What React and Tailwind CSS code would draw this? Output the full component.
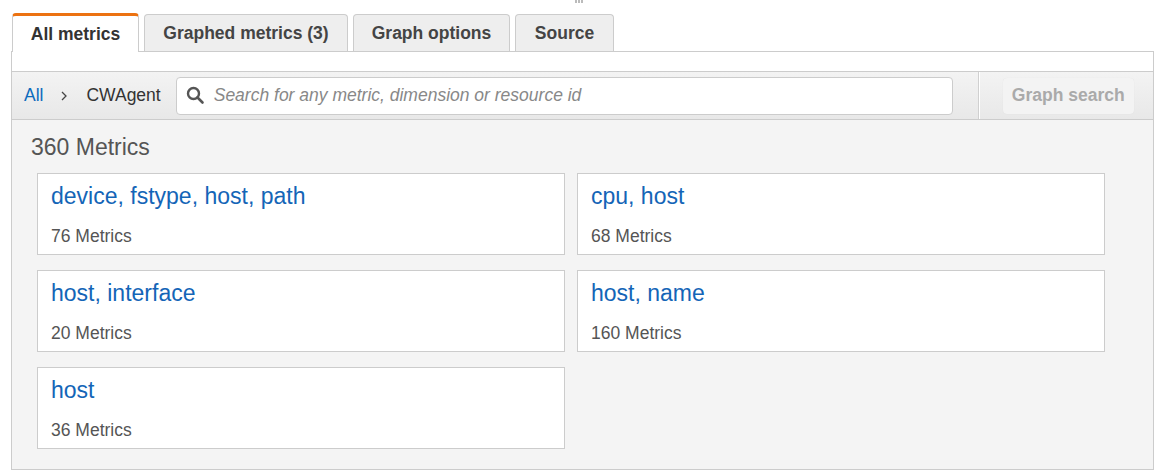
import React from 'react';

const tabs = [
  { label: 'All metrics', width: 'w-[127px]', active: true },
  { label: 'Graphed metrics (3)', width: 'w-[204px]' },
  { label: 'Graph options', width: 'w-[157px]' },
  { label: 'Source', width: 'w-[99px]' },
];

const groups = [
  { name: 'device, fstype, host, path', count: 76 },
  { name: 'cpu, host', count: 68 },
  { name: 'host, interface', count: 20 },
  { name: 'host, name', count: 160 },
  { name: 'host', count: 36 },
];

const App = () => {
  return (
    <div className="relative w-[1165px] h-[475px] bg-white font-['Liberation_Sans',Arial,sans-serif] overflow-hidden">
      {/* drag handle */}
      <div className="absolute left-[575px] top-0 flex gap-[1px]">
        <span className="w-[2px] h-[3px] bg-[#bbb]" />
        <span className="w-[2px] h-[3px] bg-[#bbb]" />
        <span className="w-[2px] h-[3px] bg-[#bbb]" />
      </div>

      <div className="flex items-end gap-[5px] pl-[12px] pt-[13px]">
        {tabs.map((tab) =>
          tab.active ? (
            <div
              key={tab.label}
              className={`${tab.width} h-[39px] -mb-[1px] relative z-10 flex items-center justify-center bg-white border-x border-[#ccc] border-t-[3px] border-t-[#ec7211] rounded-t-[4px] text-[17.5px] font-bold text-[#333]`}
            >
              {tab.label}
            </div>
          ) : (
            <div
              key={tab.label}
              className={`${tab.width} h-[37px] flex items-center justify-center bg-[#eeeeee] border border-b-0 border-[#ccc] rounded-t-[4px] text-[17.5px] font-bold text-[#444]`}
            >
              {tab.label}
            </div>
          )
        )}
      </div>

      <div className="ml-[11px] w-[1143px] border border-[#ccc]">
        <div className="h-[19px] bg-white" />

        <div className="h-[49px] flex items-center border-y border-[#ccc] bg-gradient-to-b from-[#f3f3f3] to-[#e8e8e8]">
          <span className="ml-[12px] text-[17.5px] text-[#0d6bbd]">All</span>
          <svg className="ml-[17px]" width="8" height="12" viewBox="0 0 8 12">
            <polyline points="2,2 6,6 2,10" fill="none" stroke="#444" strokeWidth="1.3" />
          </svg>
          <span className="ml-[18px] text-[17.5px] text-[#333]">CWAgent</span>
          <div className="ml-[15px] w-[777px] h-[38px] flex items-center bg-white border border-[#ccc] rounded-[4px]">
            <svg className="ml-[9px]" width="19" height="19" viewBox="0 0 19 19">
              <circle cx="7.5" cy="7.5" r="5.5" fill="none" stroke="#555" strokeWidth="2.4" />
              <line x1="11.5" y1="11.5" x2="16.5" y2="16.5" stroke="#555" strokeWidth="2.6" strokeLinecap="round" />
            </svg>
            <span className="ml-[9px] text-[17.5px] italic text-[#888]">
              Search for any metric, dimension or resource id
            </span>
          </div>
          <div className="ml-[25px] self-stretch w-[2px] border-l border-[#d0d0d0] bg-white" />
          <button className="ml-[23px] w-[131px] h-[36px] rounded-[4px] bg-[#f3f3f3] shadow-[0_0_1px_rgba(0,0,0,0.08)] text-[17.5px] font-bold text-[#aaa]">
            Graph search
          </button>
        </div>

        <div className="bg-[#f4f4f4] pt-[14px] pb-[20px]">
          <h2 className="pl-[19px] text-[23px] leading-[27px] text-[#555]">360 Metrics</h2>
          <div className="mt-[12px] pl-[25px] grid grid-cols-[528px_528px] gap-x-[12px] gap-y-[15px]">
            {groups.map((g) => (
              <div key={g.name} className="h-[82px] bg-white border border-[#ccc] px-[13px] pt-[9px]">
                <div className="text-[23px] leading-[27px] text-[#1465b7]">{g.name}</div>
                <div className="mt-[16px] text-[17.5px] leading-[21px] text-[#555]">{g.count} Metrics</div>
              </div>
            ))}
          </div>
        </div>
      </div>
    </div>
  );
};

export default App;
